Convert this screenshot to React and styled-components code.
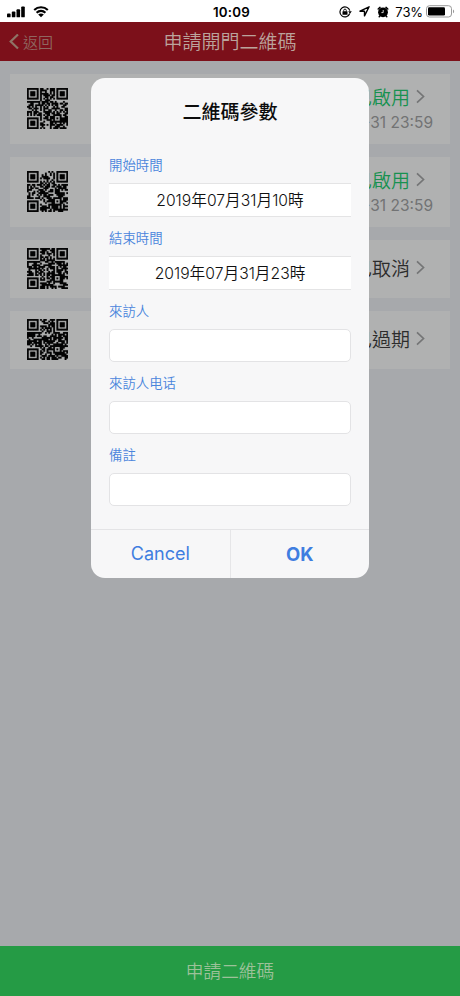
import React from 'react'
import styled, { createGlobalStyle } from 'styled-components'

const GlobalStyle = createGlobalStyle`
  * {
    box-sizing: border-box;
  }
  body {
    margin: 0;
    font-family: Inter, "Noto Sans CJK TC", "Noto Sans CJK SC", sans-serif;
  }
  button, input {
    font-family: inherit;
    margin: 0;
  }
`

const Page = styled.div`
  position: relative;
  display: flex;
  flex-direction: column;
  width: 460px;
  height: 996px;
  overflow: hidden;
  background: #a7a9ac;
`

const StatusBar = styled.div`
  display: grid;
  grid-template-columns: 1fr auto 1fr;
  align-items: center;
  flex: none;
  height: 22px;
  padding: 1px 5px 0 6px;
  background: #fff;
  color: #000;
`

const StatusSide = styled.div`
  display: flex;
  align-items: center;
  justify-content: ${props => props.$end ? 'flex-end' : 'flex-start'};
  gap: ${props => props.$end ? '0' : '8px'};
`

const Clock = styled.span`
  padding-left: 2px;
  font-size: 13.3px;
  font-weight: 600;
  letter-spacing: 0.25px;
`

const Percent = styled.span`
  margin: 0 3px 0 6px;
  font-size: 13px;
  letter-spacing: -0.1px;
`

const StatusIcon = styled.svg`
  display: block;
  flex: none;
  margin-left: ${props => props.$left || 0}px;
`

const Header = styled.header`
  display: grid;
  grid-template-columns: 1fr auto 1fr;
  align-items: center;
  flex: none;
  height: 39px;
  padding: 0 9px;
  background: #7c101a;
`

const Back = styled.button`
  display: flex;
  align-items: center;
  gap: 4px;
  padding: 2px 0 0;
  border: 0;
  background: none;
  color: #8f6760;
  font-size: 15px;
  font-weight: 350;
  line-height: 21px;
`

const HeaderTitle = styled.h1`
  margin: 0;
  padding-top: 3px;
  color: #bba39c;
  font-size: 19px;
  font-weight: 350;
  line-height: 28px;
`

const List = styled.main`
  display: flex;
  flex-direction: column;
  flex: 1;
  gap: 13px;
  padding: 13px 10px;
`

const Card = styled.div`
  display: flex;
  align-items: center;
  justify-content: space-between;
  flex: none;
  height: ${props => props.$tall ? '70px' : '58px'};
  padding: 0 17px;
  background: #b0b1b1;
`

const CardInfo = styled.div`
  display: flex;
  flex-direction: column;
  align-items: flex-end;
`

const State = styled.div`
  display: flex;
  align-items: flex-start;
  gap: 6px;
  padding: 1px 8px 0 0;
  color: ${props => props.$active ? '#189150' : '#2c2c2c'};
  font-size: 19px;
  font-weight: 350;
  line-height: 26px;
`

const Expires = styled.div`
  color: #727374;
  font-size: 15.5px;
  line-height: 22px;
`

const Apply = styled.button`
  flex: none;
  height: 50px;
  padding: 2px 0 0;
  border: 0;
  background: #259b45;
  color: #9cc199;
  font-size: 17.7px;
  font-weight: 350;
  line-height: 48px;
`

const Overlay = styled.div`
  position: absolute;
  inset: 0;
  display: flex;
  justify-content: center;
  align-items: flex-start;
  padding-top: 78px;
`

const Dialog = styled.div`
  display: flex;
  flex-direction: column;
  width: 278px;
  height: 500px;
  border-radius: 14px;
  overflow: hidden;
  background: #f7f7f8;
`

const DialogTitle = styled.h2`
  margin: 21px 0 17px;
  color: #0c0c0c;
  font-size: 19px;
  font-weight: 500;
  line-height: 28px;
  text-align: center;
`

const Form = styled.div`
  display: flex;
  flex-direction: column;
  flex: 1;
  padding: 0 18px;
`

const Field = styled.label`
  display: flex;
  flex-direction: column;
  height: ${props => props.$date ? '73px' : '72px'};
`

const FieldName = styled.span`
  height: 40px;
  padding-top: 9px;
  color: #4a85dc;
  font-size: 13.4px;
  font-weight: 350;
  line-height: 24px;
`

const DateBox = styled.div`
  height: 34px;
  border-top: 1px solid #e4e4e5;
  border-bottom: 1px solid #e4e4e5;
  background: #fff;
  color: #101010;
  font-size: 15.7px;
  font-weight: 350;
  line-height: 33px;
  text-align: center;
`

const Input = styled.input`
  width: 100%;
  height: 34px;
  padding: 0 8px;
  border: 1px solid #e3e3e5;
  border-radius: 5px;
  outline: none;
  background: #fff;
  font-size: 16px;
`

const Actions = styled.div`
  display: flex;
  flex: none;
  height: 49px;
  border-top: 1px solid #e4e4e6;
`

const Action = styled.button`
  flex: 1;
  padding: 0 0 1px;
  border: 0;
  background: none;
  color: #3f7ee0;
  font-size: ${props => props.$bold ? '18.5px' : '18px'};
  font-weight: ${props => props.$bold ? 700 : 400};
  & + & {
    border-left: 1px solid #e6e6e8;
  }
`

const QrSvg = styled.svg`
  display: block;
  flex: none;
  margin-top: -1px;
`

const SIZE = 25

// finder ring of a 7x7 (or 5x5) square, counted from its centre
const ring = (x, y, cx, cy, r) => {
    const d = Math.max(Math.abs(x - cx), Math.abs(y - cy))
    if (d > r) return null
    return r === 2 ? d !== 1 : d !== 2 && d !== 4
}

const isDark = (x, y, next) => {
    const random = next() > 0.42
    const corners = [[3, 3], [SIZE - 4, 3], [3, SIZE - 4]]
    for (const [cx, cy] of corners) {
        const value = ring(x, y, cx, cy, 4)
        if (value !== null) return value
    }
    const align = ring(x, y, 18, 18, 2)
    if (align !== null) return align
    if (x === 6 || y === 6) return (x + y) % 2 === 0
    return random
}

const QrCode = ({ seed }) => {
    let state = seed
    const next = () => {
        state = (state * 16807) % 2147483647
        return state / 2147483647
    }
    let d = ''
    for (let y = 0; y < SIZE; y++) {
        for (let x = 0; x < SIZE; x++) {
            if (isDark(x, y, next)) d += `M${x} ${y}h1.03v1.03h-1.03z`
        }
    }
    return (
        <QrSvg width="41" height="41" viewBox="0 0 25 25">
            <path d={d} fill="#080808" stroke="#080808" strokeWidth="0.12" />
        </QrSvg>
    )
}

const Signal = () => (
    <StatusIcon width="19" height="12" viewBox="0 0 19 12">
        <rect x="1" y="7.5" width="3.6" height="3.8" rx="0.9" />
        <rect x="5.8" y="5.6" width="3.6" height="5.7" rx="0.9" />
        <rect x="10.5" y="3.3" width="3.6" height="8" rx="0.9" />
        <rect x="15.2" y="0.4" width="3.6" height="10.9" rx="0.9" />
    </StatusIcon>
)

const Wifi = () => (
    <StatusIcon width="16" height="12" viewBox="0 0 16 12">
        <path d="M1.2 4.1a9.7 9.7 0 0 1 13.6 0M3.6 6.7a6.2 6.2 0 0 1 8.8 0" fill="none" stroke="#000" strokeWidth="2.1" />
        <path d="M8 11.3 5.2 8.6a3.9 3.9 0 0 1 5.6 0z" />
    </StatusIcon>
)

const RotationLock = () => (
    <StatusIcon width="13" height="12" viewBox="0 0 13 12">
        <path d="M10.7 7.5A5 5 0 1 1 10.8 4.7" fill="none" stroke="#000" strokeWidth="1.2" />
        <path d="M9.2 5.2h3.6L11 7.8z" />
        <rect x="3.5" y="5.2" width="5" height="3.6" rx="0.4" />
        <path d="M4.7 5.5V4.4a1.3 1.3 0 0 1 2.6 0v1.1" fill="none" stroke="#000" strokeWidth="0.9" />
    </StatusIcon>
)

const Location = () => (
    <StatusIcon $left={7} width="11" height="11" viewBox="0 0 11 11">
        <path d="M10.1.8 1 5.2h4.5v4.7z" fill="none" stroke="#000" strokeWidth="1.4" strokeLinejoin="round" />
    </StatusIcon>
)

const Alarm = () => (
    <StatusIcon $left={7} width="12" height="12" viewBox="0 0 12 12">
        <circle cx="6" cy="6.3" r="4.9" />
        <path d="M1.2 3 3 1.4M10.8 3 9 1.4M2.9 10l-.7.8M9.1 10l.7.8" stroke="#000" strokeWidth="1.5" strokeLinecap="round" />
        <path d="M6.2 4v2.6H4.4" fill="none" stroke="#fff" strokeWidth="0.8" />
    </StatusIcon>
)

const Battery = () => (
    <StatusIcon width="29" height="13" viewBox="0 0 29 13">
        <rect x="0.5" y="0.7" width="25" height="11.3" rx="3" fill="none" stroke="#999" />
        <rect x="2" y="2.2" width="17" height="8.3" rx="1.3" />
        <path d="M27 4.5v3.8c1.5-.5 1.5-3.3 0-3.8z" fill="#999" />
    </StatusIcon>
)

const BackArrow = () => (
    <svg width="10" height="17" viewBox="0 0 10 17">
        <path d="M9 .5 1.7 7.5 9 14.5" fill="none" stroke="#8f7466" strokeWidth="2.2" />
    </svg>
)

const Chevron = () => (
    <svg width="9" height="20" viewBox="0 0 9 20">
        <path d="m1 4.3 6.5 6.2L1 16.7" fill="none" stroke="#747576" strokeWidth="1.7" />
    </svg>
)

const codes = [
    { seed: 7351, state: '已啟用', active: true, expires: '2019-07-31 23:59' },
    { seed: 90217, state: '已啟用', active: true, expires: '2019-07-31 23:59' },
    { seed: 44821, state: '已取消' },
    { seed: 612903, state: '已過期' },
]

const fields = [
    { name: '開始時間', date: '2019年07月31月10時' },
    { name: '結束時間', date: '2019年07月31月23時' },
    { name: '來訪人' },
    { name: '來訪人电话' },
    { name: '備註' },
]

const App = () => {
    return (
        <>
            <GlobalStyle />
            <Page>
                <StatusBar>
                    <StatusSide>
                        <Signal />
                        <Wifi />
                    </StatusSide>
                    <Clock>10:09</Clock>
                    <StatusSide $end>
                        <RotationLock />
                        <Location />
                        <Alarm />
                        <Percent>73%</Percent>
                        <Battery />
                    </StatusSide>
                </StatusBar>
                <Header>
                    <Back><BackArrow />返回</Back>
                    <HeaderTitle>申請開門二維碼</HeaderTitle>
                </Header>
                <List>
                    {codes.map((code, index) => (
                        <Card key={index} $tall={!!code.expires}>
                            <QrCode seed={code.seed} />
                            <CardInfo>
                                <State $active={code.active}>{code.state}<Chevron /></State>
                                {code.expires && <Expires>{code.expires}</Expires>}
                            </CardInfo>
                        </Card>
                    ))}
                </List>
                <Apply>申請二維碼</Apply>
                <Overlay>
                    <Dialog>
                        <DialogTitle>二維碼參數</DialogTitle>
                        <Form>
                            {fields.map((field, index) => (
                                <Field key={index} $date={!!field.date}>
                                    <FieldName>{field.name}</FieldName>
                                    {field.date ? <DateBox>{field.date}</DateBox> : <Input type="text" />}
                                </Field>
                            ))}
                        </Form>
                        <Actions>
                            <Action>Cancel</Action>
                            <Action $bold>OK</Action>
                        </Actions>
                    </Dialog>
                </Overlay>
            </Page>
        </>
    )
}

export default App
